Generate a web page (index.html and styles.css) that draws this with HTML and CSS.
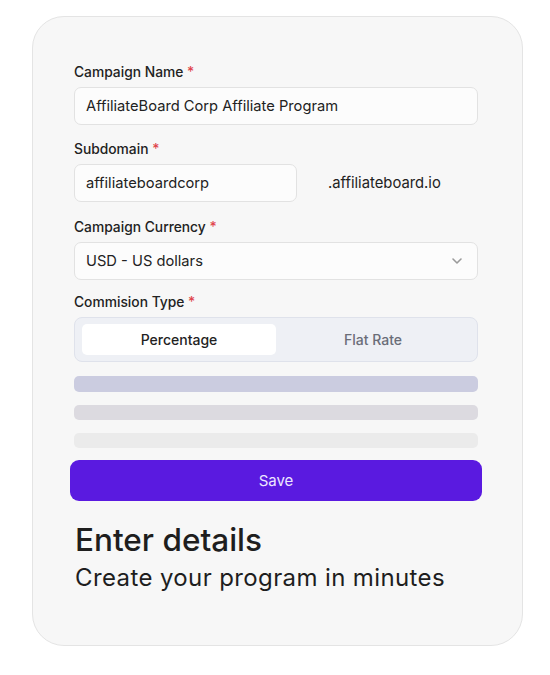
FILE: index.html
```html
<!DOCTYPE html>
<html>
<head>
<meta charset="utf-8">
<link rel="stylesheet" href="styles.css">
</head>
<body>
<div class="card">
  <div class="field f1">
    <div class="label">Campaign Name <span class="req">*</span></div>
    <div class="input">AffiliateBoard Corp Affiliate Program</div>
  </div>
  <div class="field f2">
    <div class="label">Subdomain <span class="req">*</span></div>
    <div class="row">
      <div class="input short">affiliateboardcorp</div>
      <div class="suffix">.affiliateboard.io</div>
    </div>
  </div>
  <div class="field f3">
    <div class="label">Campaign Currency <span class="req">*</span></div>
    <div class="input select">
      <span>USD - US dollars</span>
      <svg class="chev" width="12" height="8" viewBox="0 0 12 8"><path d="M2 2l4 4 4-4" fill="none" stroke="#9a9a9a" stroke-width="1.6" stroke-linecap="round" stroke-linejoin="round"/></svg>
    </div>
  </div>
  <div class="field f4">
    <div class="label">Commision Type <span class="req">*</span></div>
    <div class="segment">
      <div class="seg active">Percentage</div>
      <div class="seg">Flat Rate</div>
    </div>
  </div>
  <div class="bar b1"></div>
  <div class="bar b2"></div>
  <div class="bar b3"></div>
  <div class="save">Save</div>
  <h1 class="title">Enter details</h1>
  <p class="sub">Create your program in minutes</p>
</div>
</body>
</html>
```
FILE: styles.css
```css
* { box-sizing: border-box; }
html, body { margin: 0; padding: 0; background: #ffffff; }
body { font-family: Inter, "Noto Sans", sans-serif; color: #1f1f1f; }

.card {
  margin: 16px 0 0 32px;
  width: 491px;
  height: 630px;
  background: #f7f7f7;
  border: 1px solid #e4e4e4;
  border-radius: 32px;
  padding: 46px 44px 0 41px;
}

.f1 { margin-bottom: 15px; }
.f2 { margin-bottom: 16px; }
.f3 { margin-bottom: 13px; }
.f4 { margin-bottom: 14px; }

.label {
  font-size: 13.8px;
  font-weight: 500;
  line-height: 18px;
  color: #222;
  margin-bottom: 6px;
}
.req { color: #e0424a; }

.input {
  height: 38px;
  background: #fcfcfc;
  border: 1px solid #e2e2e2;
  border-radius: 7px;
  padding: 0 11px;
  display: flex;
  align-items: center;
  font-size: 14.7px;
  color: #222;
}
.input.short { width: 223px; }
.row { display: flex; align-items: center; }
.suffix { margin-left: 31px; font-size: 14.8px; color: #222; }

.select { justify-content: space-between; padding-right: 14px; }
.chev { display: block; }

.segment {
  height: 45px;
  background: #eef0f5;
  border: 1px solid #dfe2eb;
  border-radius: 8px;
  padding: 6px 7px;
  display: flex;
}
.seg {
  flex: 1;
  display: flex;
  align-items: center;
  justify-content: center;
  font-size: 14px;
  font-weight: 500;
  color: #6a6d78;
  border-radius: 5px;
}
.seg.active { background: #ffffff; color: #222; }

.bar { border-radius: 5px; }
.b1 { height: 16px; background: #cbcce0; margin-bottom: 13px; }
.b2 { height: 15px; background: #dcdae0; margin-bottom: 13px; }
.b3 { height: 15px; background: #ebebeb; margin-bottom: 12px; }

.save {
  margin: 0 -4px;
  height: 41px;
  background: #5a1ae0;
  border-radius: 9px;
  display: flex;
  align-items: center;
  justify-content: center;
  font-size: 15px;
  color: #ece6ff;
}

.title {
  margin: 20px 0 0 1px;
  font-size: 31.5px;
  font-weight: 500;
  line-height: 38px;
  color: #1e1e1e;
}
.sub {
  margin: 4px 0 0 1px;
  font-size: 24px;
  line-height: 30px;
  letter-spacing: 0.38px;
  color: #1e1e1e;
}
```
